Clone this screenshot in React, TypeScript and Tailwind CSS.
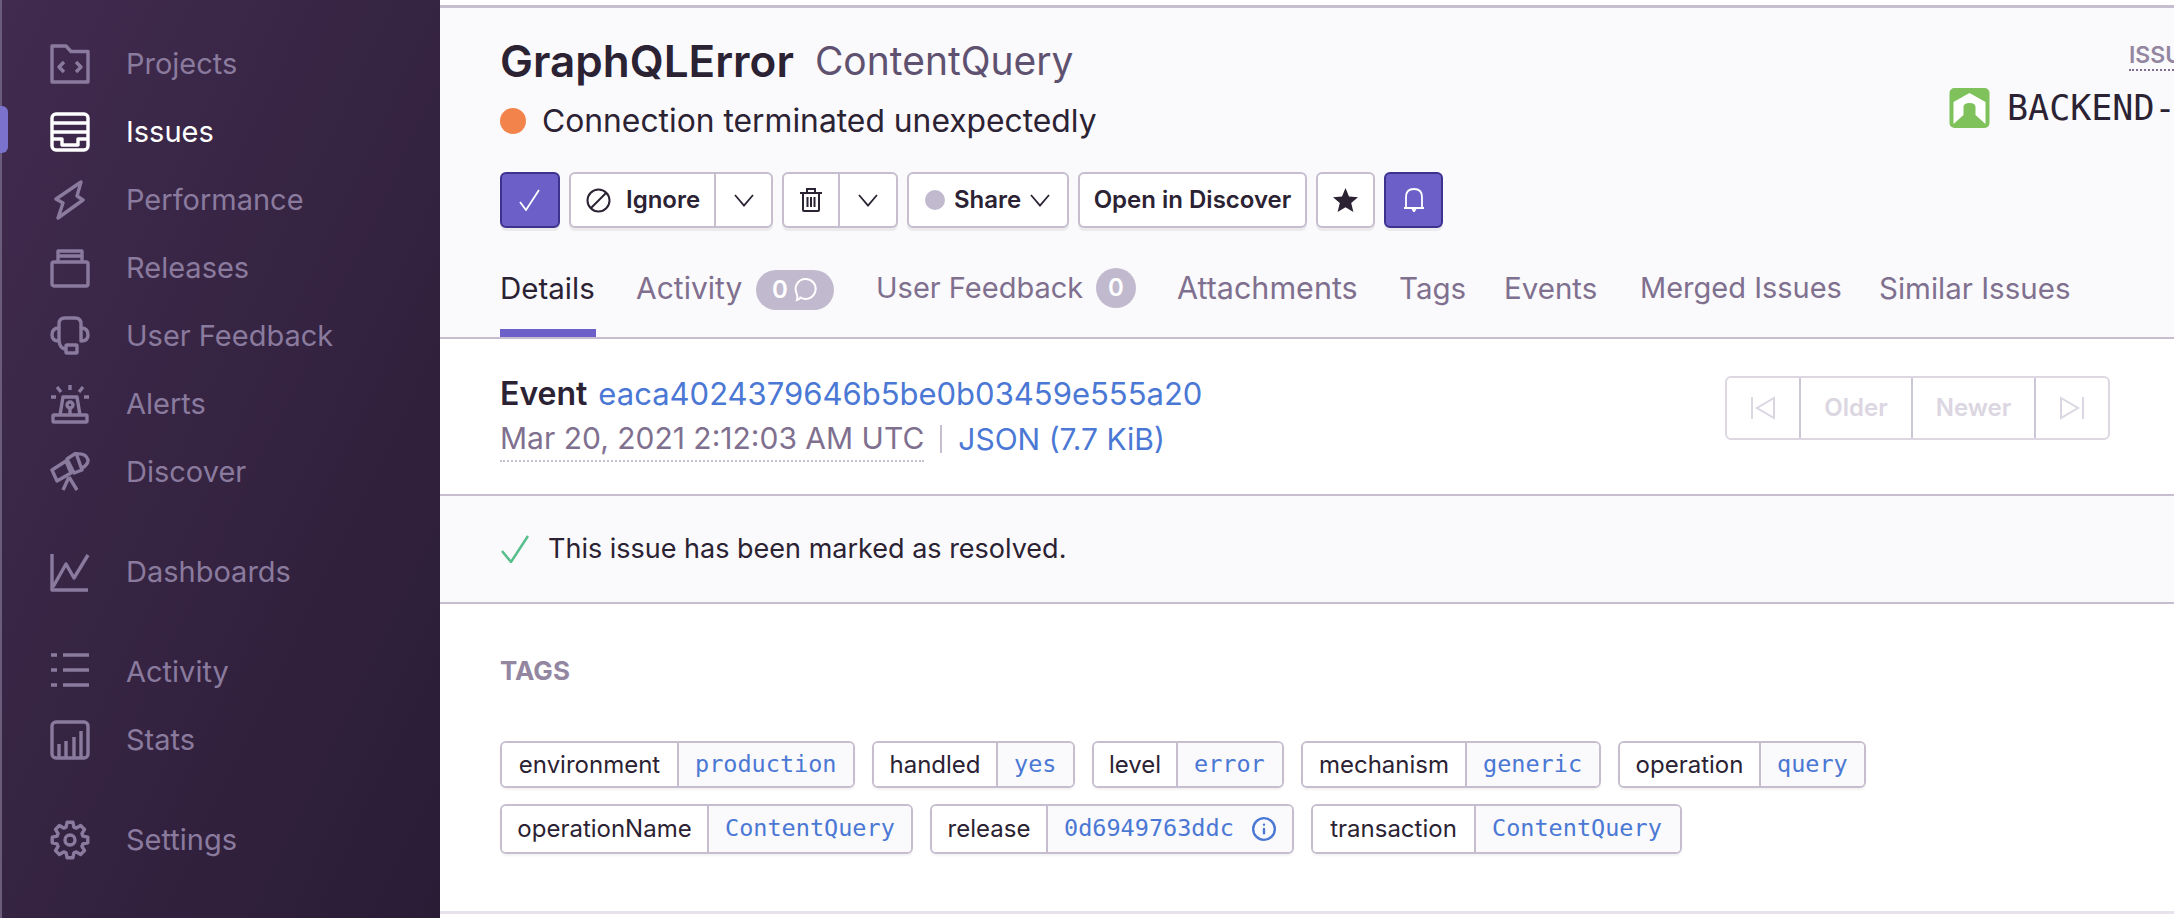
import { Info } from "lucide-react";

const sans = "font-['Inter','Liberation_Sans',sans-serif]";
const mono = "font-['DejaVu_Sans_Mono',monospace]";

// eight rounded teeth, same gear as the sentry settings icon
const gearPath = Array.from({ length: 8 }, (_, i) => {
  const a = (i * 45 - 90) * (Math.PI / 180);
  const pt = (r: number, d: number) => {
    const t = a + (d * Math.PI) / 180;
    return `${(20 + r * Math.cos(t)).toFixed(2)} ${(20 + r * Math.sin(t)).toFixed(2)}`;
  };
  return `${i === 0 ? "M" : "L"}${pt(13.5, -17)} L${pt(18, -9)} L${pt(18, 9)} L${pt(13.5, 17)}`;
}).join(" ") + " Z";

const navIcons: Record<string, React.ReactNode> = {
  Projects: (
    <>
      <path d="M2 2 L16 2 L21 7.5 L38 7.5 L38 38 L2 38 Z" />
      <path d="M14 18 L9 23 L14 28 M26 18 L31 23 L26 28" />
    </>
  ),
  Issues: (
    <>
      <rect x="2" y="2" width="36" height="36" rx="4" />
      <path d="M3 11 H37 M3 20 H37 M3 27 H12 V33 H28 V27 H37" />
    </>
  ),
  Performance: <path d="M31 2 L27 16 L33 20 L8 38 L13 23 L6 19 Z" />,
  Releases: (
    <>
      <rect x="2" y="14" width="36" height="24" rx="2" />
      <path d="M8 14 V3 H32 V14 M8 8 H32" />
    </>
  ),
  "User Feedback": (
    <>
      <path d="M9 12 V8 Q9 2 15 2 H25 Q31 2 31 8 V12" />
      <path d="M9 12 Q2 12 2 19 Q2 25 9 25 Z M31 12 Q38 12 38 19 Q38 25 31 25 Z" />
      <path d="M9 25 Q10 33 16 33" />
      <rect x="16" y="29" width="11" height="8" rx="1" />
    </>
  ),
  Alerts: (
    <>
      <rect x="3" y="31" width="34" height="7" rx="1" />
      <path d="M10 31 L13 13 H27 L30 31" />
      <circle cx="20" cy="21" r="3" />
      <path d="M20 24 V31 M20 1 V6 M7 3 L11 8 M33 3 L29 8 M1 13 H6 M34 13 H39" />
    </>
  ),
  Discover: (
    <>
      <path d="M2 18 L16 9 L21 21 L7 29 Z" />
      <path d="M17 7 L26 1 L32 18 L24 21 Z" />
      <path d="M27 2 Q36 1 38 8 Q38 13 32 16" />
      <path d="M19 25 L13 38 M19 25 L27 38" />
    </>
  ),
  Dashboards: <path d="M2 2 V38 H38 M3 35 L16 12 L24 26 L38 3" />,
  Activity: <path d="M1 3 H7 M13 3 H39 M1 18 H7 M13 18 H39 M1 33 H7 M13 33 H39" />,
  Stats: (
    <>
      <rect x="2" y="2" width="36" height="36" rx="4" />
      <path d="M9 37 V24 M16 37 V21 M24 37 V17 M31 37 V11" />
    </>
  ),
  Settings: (
    <>
      <circle cx="20" cy="20" r="5" />
      <path d={gearPath} />
    </>
  ),
};

function NavItem({ label, active, className }: { label: string; active?: boolean; className?: string }) {
  return (
    <div className={`flex h-[68px] items-center gap-[36px] pl-[48px] ${className ?? ""}`}>
      <svg width="40" height="40" viewBox="0 0 40 40" fill="none" stroke="currentColor" strokeWidth="3.4" strokeLinejoin="round" className={active ? "text-white" : "text-[#8a7b9e]"}>
        {navIcons[label]}
      </svg>
      <span className={`text-[29px] ${active ? "text-white" : "text-[#8a7b9e]"}`}>{label}</span>
    </div>
  );
}

function Sidebar() {
  return (
    <aside className="relative h-full w-[440px] shrink-0 border-l-2 border-[#6c5c7c] bg-gradient-to-br from-[#412b4f] to-[#2a1c35] pt-[30px]">
      <div className="absolute left-[-2px] top-[106px] h-[47px] w-[8px] rounded-r-md bg-[#7a72cc]" />
      <NavItem label="Projects" />
      <NavItem label="Issues" active />
      <NavItem label="Performance" />
      <NavItem label="Releases" />
      <NavItem label="User Feedback" />
      <NavItem label="Alerts" />
      <NavItem label="Discover" />
      <NavItem label="Dashboards" className="mt-[32px]" />
      <NavItem label="Activity" className="mt-[32px]" />
      <NavItem label="Stats" />
      <NavItem label="Settings" className="mt-[32px]" />
    </aside>
  );
}

const btn = "flex h-[56px] items-center rounded-md border-2 border-[#c6becf] bg-white text-[24px] font-semibold text-[#2b2233] shadow-[0_3px_0_rgba(0,0,0,0.06)]";
const primaryBtn = "flex h-[56px] items-center justify-center rounded-md border-2 border-[#3d328e] bg-[#6c5fc7] text-white shadow-[0_3px_0_rgba(0,0,0,0.06)]";

function Chevron() {
  return (
    <svg width="20" height="13" viewBox="0 0 20 13" fill="none" stroke="currentColor" strokeWidth="1.8" className="shrink-0">
      <path d="M1 1 L10 11.5 L19 1" />
    </svg>
  );
}

function Toolbar() {
  return (
    <div className="mt-[29px] flex gap-[9px]">
      <div className={`${primaryBtn} w-[60px]`}>
        <svg width="22" height="22" viewBox="0 0 22 22" fill="none" stroke="currentColor" strokeWidth="1.8">
          <path d="M1 13 L7 21 L20 1" />
        </svg>
      </div>
      <div className={`${btn} w-[204px]`}>
        <div className="flex h-full w-[145px] items-center gap-[15px] border-r-2 border-[#c6becf] pl-[15px]">
          <svg width="25" height="25" viewBox="0 0 25 25" fill="none" stroke="currentColor" strokeWidth="2">
            <circle cx="12.5" cy="12.5" r="11" />
            <path d="M5 20 L20 5" />
          </svg>
          <span>Ignore</span>
        </div>
        <div className="flex flex-1 justify-center"><Chevron /></div>
      </div>
      <div className={`${btn} w-[116px]`}>
        <div className="flex h-full w-[56px] items-center justify-center border-r-2 border-[#c6becf]">
          <svg width="22" height="24" viewBox="0 0 22 24" fill="none" stroke="currentColor" strokeWidth="2">
            <path d="M0 5 H22 M7 5 V1 H15 V5 M3 5 V22 Q3 23 4 23 H18 Q19 23 19 22 V5 M7.5 9 V19 M11 9 V19 M14.5 9 V19" />
          </svg>
        </div>
        <div className="flex flex-1 justify-center"><Chevron /></div>
      </div>
      <div className={`${btn} w-[162px] gap-[9px] pl-[16px]`}>
        <span className="size-[20px] rounded-full bg-[#c1b9cd]" />
        <span>Share</span>
        <Chevron />
      </div>
      <div className={`${btn} w-[229px] justify-center text-[23.6px]`}>Open in Discover</div>
      <div className={`${btn} w-[59px] justify-center`}>
        <svg width="25" height="24" viewBox="0 0 25 24" fill="currentColor">
          <path d="M12.5 0 L16 8.5 L25 9.2 L18.2 15 L20.4 24 L12.5 19.2 L4.6 24 L6.8 15 L0 9.2 L9 8.5 Z" />
        </svg>
      </div>
      <div className={`${primaryBtn} w-[59px]`}>
        <svg width="20" height="24" viewBox="0 0 20 24" fill="none" stroke="currentColor" strokeWidth="1.8">
          <path d="M2 20 V9 Q2 1 10 1 Q18 1 18 9 V20 Z M0 20 H20 M8 20 L10 23.5 L12 20" />
        </svg>
      </div>
    </div>
  );
}

function Tabs() {
  return (
    <div className="mt-[43px] flex h-[66px] items-start text-[29.5px] leading-[34px] text-[#80708f]">
      <div className="mr-[40px] h-[66px] w-[96px] shrink-0 border-b-[8px] border-[#6c5fc7] text-[#2b2233]">Details</div>
      <div className="flex h-[34px] w-[240px] shrink-0 items-center">
        <span className="w-[120px] shrink-0 text-[30px]">Activity</span>
        <span className="mt-[4px] flex h-[40px] w-[78px] items-center justify-center gap-[4px] rounded-full bg-[#c1b9cd] text-[24px] font-semibold text-white">
          0
          <svg width="26" height="26" viewBox="0 0 26 26" fill="none" stroke="currentColor" strokeWidth="2">
            <path d="M5 23 Q8 22 8.5 20.5 A10 10 0 1 0 4.5 16 Q6 20 5 23 Z" />
          </svg>
        </span>
      </div>
      <div className="flex h-[34px] w-[301px] shrink-0 items-center">
        <span className="w-[220px] shrink-0 text-[29px]">User Feedback</span>
        <span className="flex size-[40px] items-center justify-center rounded-full bg-[#c1b9cd] text-[24px] font-semibold text-white">0</span>
      </div>
      <div className="w-[222px] shrink-0 text-[30.5px]">Attachments</div>
      <div className="w-[105px] shrink-0">Tags</div>
      <div className="w-[136px] shrink-0">Events</div>
      <div className="w-[239px] shrink-0 text-[29px]">Merged Issues</div>
      <div className="shrink-0">Similar Issues</div>
    </div>
  );
}

function Header() {
  return (
    <header className="border-b-2 border-t-[3px] border-[#c6becf] bg-[#faf9fb] pl-[60px]">
      <div className="flex justify-between">
        <div>
          <div className="mt-[26px] flex h-[54px] items-center gap-[21px]">
            <h1 className="text-[44px] font-semibold text-[#2b2233]">GraphQLError</h1>
            <span className="text-[39px] text-[#5f5270]">ContentQuery</span>
          </div>
          <div className="mt-[11px] flex h-[44px] items-center gap-[16px] text-[31.8px] text-[#2b2233]">
            <span className="h-[26px] w-[26px] rounded-full bg-[#f2834a]" />
            Connection terminated unexpectedly
          </div>
        </div>
        <div className="w-[225px] shrink-0 overflow-hidden pt-[33px]">
          <div className="ml-[180px] w-fit whitespace-nowrap border-b-2 border-dotted border-[#80708f] text-[23px] font-semibold leading-[28px] text-[#9386a0]">ISSU</div>
          <div className="mt-[16px] flex items-center gap-[17px] whitespace-nowrap">
            <svg width="41" height="40" viewBox="0 0 40 40" className="shrink-0">
              <rect width="40" height="40" rx="5" fill="#7fc25c" />
              <path d="M20 5 L36 14 V36 L26 27 V19 Q26 15 20 15 Q14 15 14 19 V27 L4 36 V14 Z" fill="#fff" />
            </svg>
            <span className={`${mono} text-[35px] leading-[42px] text-[#2b2233]`}>BACKEND-</span>
          </div>
        </div>
      </div>
      <Toolbar />
      <Tabs />
    </header>
  );
}

function EventBar() {
  const pager = "flex h-full items-center justify-center border-r-2 border-[#cdc6d6] text-[24px] font-semibold text-[#dbd6e1]";
  return (
    <section className="flex h-[157px] items-center justify-between border-b-2 border-[#c6becf] bg-white pl-[60px] pr-[64px]">
      <div className="flex flex-col text-[30px] leading-[44px]">
        <div className="flex gap-[11px] text-[31px]">
          <span className="text-[32px] font-semibold text-[#2b2233]">Event</span>
          <span className="text-[#4a78d4]">eaca4024379646b5be0b03459e555a20</span>
        </div>
        <div className="flex items-center">
          <span className="border-b-2 border-dotted border-[#c6becf] text-[#80708f]">Mar 20, 2021 2:12:03 AM UTC</span>
          <span className="mx-[16px] h-[28px] w-[2px] bg-[#c6becf]" />
          <span className="text-[#4a78d4]">JSON (7.7 KiB)</span>
        </div>
      </div>
      <div className="mb-[18px] flex h-[64px] w-[385px] overflow-hidden rounded-md border-2 border-[#dcd7e0]">
        <div className={`${pager} w-[74px]`}>
          <svg width="28" height="24" viewBox="0 0 28 24" fill="none" stroke="currentColor" strokeWidth="2"><path d="M3 1 V23 M25 2 L8 12 L25 22 Z" /></svg>
        </div>
        <div className={`${pager} w-[112px]`}>Older</div>
        <div className={`${pager} w-[123px]`}>Newer</div>
        <div className="flex flex-1 items-center justify-center text-[#dbd6e1]">
          <svg width="28" height="24" viewBox="0 0 28 24" fill="none" stroke="currentColor" strokeWidth="2"><path d="M25 1 V23 M3 2 L20 12 L3 22 Z" /></svg>
        </div>
      </div>
    </section>
  );
}

function Resolved() {
  return (
    <section className="flex h-[108px] items-center gap-[19px] border-b-2 border-[#c6becf] bg-[#faf9fb] pl-[61px]">
      <svg width="28" height="28" viewBox="0 0 28 28" fill="none" stroke="#57be8c" strokeWidth="2.5"><path d="M1 16 L10 27 L27 1" /></svg>
      <span className="text-[27px] text-[#2b2233]">This issue has been marked as resolved.</span>
    </section>
  );
}

function Tag({ k, v, icon, width, keyWidth }: { k: string; v: string; icon?: boolean; width: string; keyWidth: string }) {
  return (
    <div className={`flex items-stretch overflow-hidden rounded-md border-2 border-[#c6becf] text-[24px] shadow-[0_2px_2px_rgba(0,0,0,0.05)] ${width}`}>
      <span className={`flex shrink-0 items-center justify-center border-r-2 border-[#c6becf] bg-white text-[#2b2233] ${keyWidth}`}>{k}</span>
      <span className={`flex flex-1 items-center gap-[17px] whitespace-nowrap bg-[#faf9fb] pl-[16px] text-[23.5px] text-[#4a78d4] ${mono}`}>
        {v}
        {icon && <Info size={26} strokeWidth={2.2} className="shrink-0" />}
      </span>
    </div>
  );
}

function TagsSection() {
  return (
    <section className="h-[310px] border-b-[3px] border-[#e7e1ec] bg-white pl-[60px] pt-[52px]">
      <h3 className="text-[26px] font-bold leading-[30px] text-[#9386a0]">TAGS</h3>
      <div className="mt-[55px] flex flex-col gap-[16px]">
        <div className="flex h-[47px] gap-[17px]">
          <Tag k="environment" v="production" width="w-[355px]" keyWidth="w-[177px]" />
          <Tag k="handled" v="yes" width="w-[203px]" keyWidth="w-[124px]" />
          <Tag k="level" v="error" width="w-[192px]" keyWidth="w-[84px]" />
          <Tag k="mechanism" v="generic" width="w-[300px]" keyWidth="w-[164px]" />
          <Tag k="operation" v="query" width="w-[248px]" keyWidth="w-[141px]" />
        </div>
        <div className="flex h-[50px] gap-[17px]">
          <Tag k="operationName" v="ContentQuery" width="w-[413px]" keyWidth="w-[207px]" />
          <Tag k="release" v="0d6949763ddc" icon width="w-[364px]" keyWidth="w-[116px]" />
          <Tag k="transaction" v="ContentQuery" width="w-[371px]" keyWidth="w-[163px]" />
        </div>
      </div>
    </section>
  );
}

export default function App() {
  return (
    <div className={`flex h-[918px] w-[2174px] overflow-hidden bg-white ${sans}`}>
      <Sidebar />
      <main className="min-w-0 flex-1 pt-[5px]">
        <Header />
        <EventBar />
        <Resolved />
        <TagsSection />
      </main>
    </div>
  );
}
